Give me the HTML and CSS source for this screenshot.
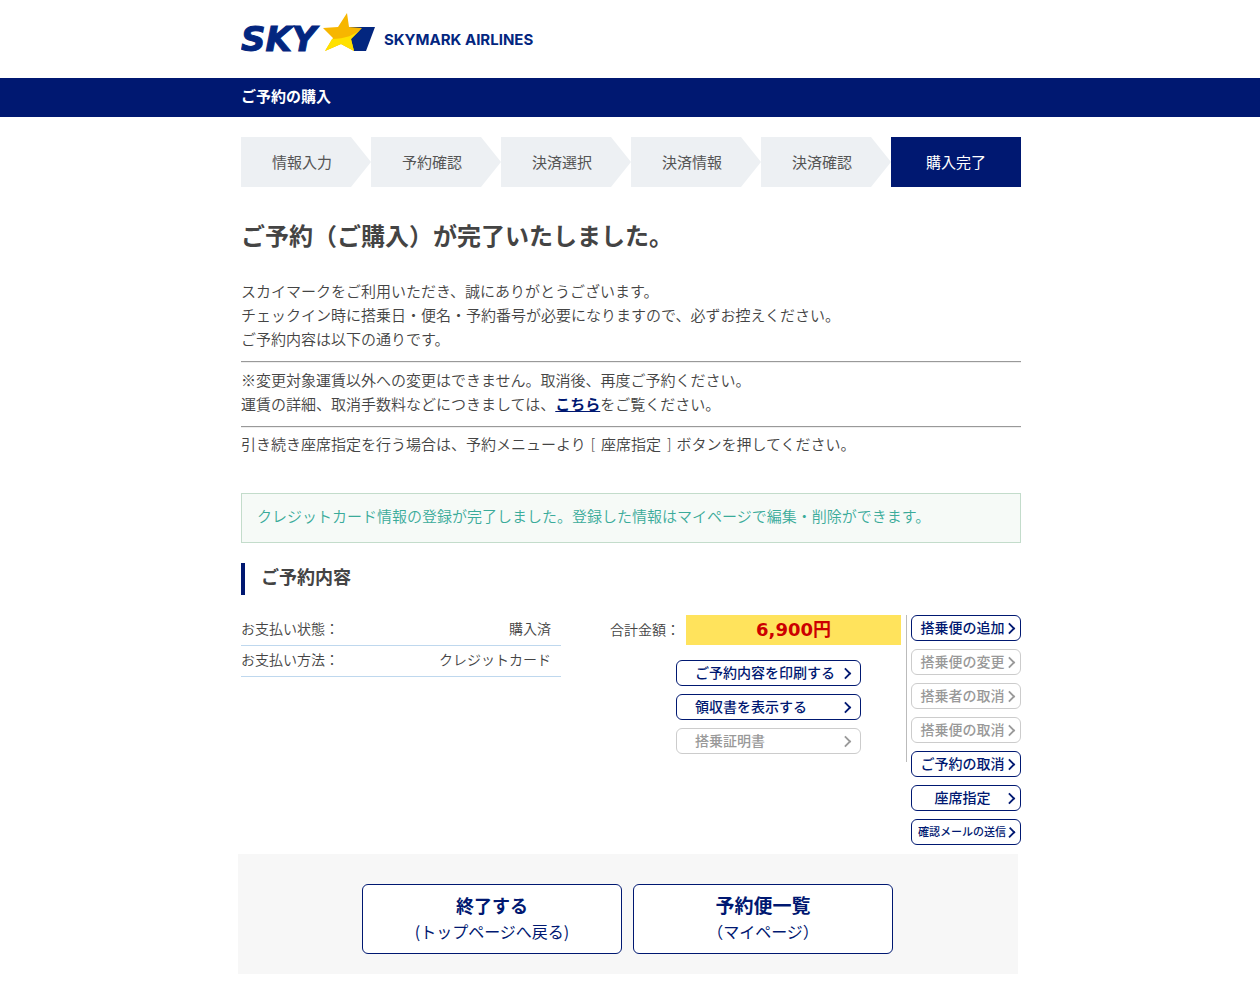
FILE: index.html
```html
<!DOCTYPE html>
<html lang="ja">
<head>
    <meta charset="UTF-8">
    <meta name="viewport" content="width=device-width, initial-scale=1.0">
    <title>ご予約の購入</title>
    <link rel="stylesheet" href="styles.css">
</head>
<body>
    <header class="site-header">
        <div class="wrap">
            <a href="#" class="logo">
                <svg width="300" height="50" viewBox="0 0 300 50">
                    <text class="logo-sky" x="0" y="39">SKY</text>
                    <path fill="#03267f" d="M107 15h27l-9 24h-12l-8-12z"/>
                    <path fill="#f7b600" d="M106 1l2 14 13 1-11 11 3 12-13-7-16 7 8-13-10-10 15-1z"/>
                    <path fill="#ffe100" d="M121 16l-11 11 3 12-13-7-16 7 7-12c13 0 23-4 30-11z"/>
                    <text class="logo-name" x="143" y="33">SKYMARK AIRLINES</text>
                </svg>
            </a>
        </div>
    </header>

    <div class="title-bar">
        <div class="wrap">
            <h1>ご予約の購入</h1>
        </div>
    </div>

    <main class="wrap">
        <ol class="steps">
            <li>情報入力</li>
            <li>予約確認</li>
            <li>決済選択</li>
            <li>決済情報</li>
            <li>決済確認</li>
            <li class="current">購入完了</li>
        </ol>

        <h2 class="complete">ご予約（ご購入）が完了いたしました。</h2>

        <p>スカイマークをご利用いただき、誠にありがとうございます。<br>
        チェックイン時に搭乗日・便名・予約番号が必要になりますので、必ずお控えください。<br>
        ご予約内容は以下の通りです。</p>
        <hr>
        <p>※変更対象運賃以外への変更はできません。取消後、再度ご予約ください。<br>
        運賃の詳細、取消手数料などにつきましては、<a href="#" class="here">こちら</a>をご覧ください。</p>
        <hr>
        <p class="seat-note">引き続き座席指定を行う場合は、予約メニューより [ 座席指定 ] ボタンを押してください。</p>

        <p class="notice">クレジットカード情報の登録が完了しました。登録した情報はマイページで編集・削除ができます。</p>

        <h3 class="section-title">ご予約内容</h3>

        <div class="detail">
            <table class="payment">
                <tr>
                    <th scope="row">お支払い状態：</th>
                    <td>購入済</td>
                </tr>
                <tr>
                    <th scope="row">お支払い方法：</th>
                    <td>クレジットカード</td>
                </tr>
            </table>

            <div class="total">
                <div class="total-row">
                    <span class="total-label">合計金額：</span>
                    <strong class="price">6,900円</strong>
                </div>
                <div class="print-buttons">
                    <button type="button" class="btn"><span>ご予約内容を印刷する</span></button>
                    <button type="button" class="btn"><span>領収書を表示する</span></button>
                    <button type="button" class="btn" disabled><span>搭乗証明書</span></button>
                </div>
            </div>

            <div class="menu">
                <button type="button" class="btn"><span>搭乗便の追加</span></button>
                <button type="button" class="btn" disabled><span>搭乗便の変更</span></button>
                <button type="button" class="btn" disabled><span>搭乗者の取消</span></button>
                <button type="button" class="btn" disabled><span>搭乗便の取消</span></button>
                <button type="button" class="btn"><span>ご予約の取消</span></button>
                <button type="button" class="btn"><span>座席指定</span></button>
                <button type="button" class="btn small"><span>確認メールの送信</span></button>
            </div>
        </div>

        <div class="bottom">
            <a href="#" class="big-btn"><strong>終了する</strong><span>(トップページへ戻る)</span></a>
            <a href="#" class="big-btn"><strong class="wide">予約便一覧</strong><span>（マイページ）</span></a>
        </div>
    </main>
</body>
</html>
```
FILE: styles.css
```css
* {
    margin: 0;
    padding: 0;
    box-sizing: border-box;
}

body {
    font-family: "Noto Sans CJK JP", sans-serif;
    font-size: 15px;
    line-height: 24px;
    font-weight: 350;
    color: #444;
    background-color: #fff;
}

.wrap {
    max-width: 782px;
    margin: 0 auto;
    padding-left: 2px;
}

/* Header */
.site-header {
    height: 78px;
    padding-top: 12px;
}

.logo svg {
    display: block;
}

.logo-sky {
    font-family: "DejaVu Sans", sans-serif;
    font-size: 34px;
    font-weight: bold;
    font-style: italic;
    fill: #03267f;
    stroke: #03267f;
}

.logo-name {
    font-family: Inter, sans-serif;
    font-size: 15px;
    font-weight: 700;
    fill: #03267f;
}

.title-bar {
    background-color: #001871;
    color: #fff;
}

.title-bar h1 {
    padding-bottom: 3px;
    font-size: 15px;
    line-height: 36px;
    font-weight: bold;
}

/* Steps */
.steps {
    display: grid;
    grid-template-columns: repeat(6, 1fr);
    margin: 20px 0 31px;
    list-style: none;
}

.steps li {
    padding-right: 8px;
    text-align: center;
    font-weight: 400;
    line-height: 50px;
    color: #555;
    background-color: #edf0f3;
    clip-path: polygon(0 0, calc(100% - 20px) 0, 100% 50%, calc(100% - 20px) 100%, 0 100%);
}

.steps .current {
    padding-right: 0;
    color: #fff;
    background-color: #001871;
    clip-path: none;
}

/* Message */
.complete {
    margin-bottom: 27px;
    font-size: 24px;
    line-height: 34px;
    font-weight: bold;
}

hr {
    margin: 10px 0 5px;
    border: solid;
    border-width: 1px 0;
    border-color: #999 #eee #eee;
}

.here {
    color: #001871;
    font-weight: bold;
}

.seat-note {
    font-family: "DejaVu Sans", "Noto Sans CJK JP", sans-serif;
}

.notice {
    margin: 36px 0 20px;
    padding: 10px 15px 14px;
    color: #3aab9a;
    background-color: #f6faf7;
    border: 1px solid #c3dccb;
}

.section-title {
    margin-bottom: 20px;
    padding: 0 0 6px 16px;
    font-size: 18px;
    line-height: 26px;
    border-left: 4px solid #001871;
}

/* Reservation detail */
.detail {
    display: flex;
    align-items: flex-start;
    font-size: 14px;
}

.payment {
    width: 320px;
    margin-right: 49px;
    border-spacing: 0;
}

.payment th,
.payment td {
    height: 31px;
    padding-bottom: 5px;
    font-weight: 350;
    text-align: left;
    border-bottom: 1px solid #bfd8ee;
}

.payment td {
    padding-right: 10px;
    text-align: right;
}

.total {
    flex: 1;
    margin-right: 4px;
    padding: 0 5px 8px 0;
    border-right: 1px solid #bbb;
}

.total-row {
    display: flex;
    gap: 6px;
    line-height: 30px;
}

.total-label {
    line-height: 28px;
}

.price {
    flex: 1;
    font-family: "DejaVu Sans", "Noto Sans CJK JP", sans-serif;
    font-size: 18px;
    font-weight: 700;
    text-align: center;
    color: #c00;
    background-color: #ffe35c;
}

.print-buttons,
.menu {
    display: flex;
    flex-direction: column;
    gap: 8px;
}

.print-buttons {
    width: 185px;
    margin: 15px 0 0 66px;
}

.menu {
    width: 110px;
}

/* Buttons */
.btn {
    display: flex;
    align-items: center;
    height: 26px;
    padding: 0 10px 0 18px;
    font-family: inherit;
    font-size: 14px;
    font-weight: 500;
    text-align: left;
    white-space: nowrap;
    color: #001871;
    background-color: #fff;
    border: 1px solid #001871;
    border-radius: 6px;
    cursor: pointer;
}

.btn span {
    flex: 1;
    padding-bottom: 2px;
}

.btn::after {
    content: "";
    width: 7px;
    height: 7px;
    border: solid currentColor;
    border-width: 2px 2px 0 0;
    transform: rotate(45deg) scale(0.9);
}

.btn:disabled {
    color: #999;
    border-color: #ccc;
    cursor: default;
}

.menu .btn {
    padding: 0 6px 0 8px;
    text-align: center;
}

.menu .small {
    padding-left: 6px;
    font-size: 11px;
}

/* Bottom navigation */
.bottom {
    display: flex;
    justify-content: center;
    gap: 11px;
    margin: 9px 3px 20px -3px;
    padding: 30px 1px 20px 0;
    background-color: #f7f7f7;
}

.big-btn {
    display: flex;
    flex-direction: column;
    width: 260px;
    height: 70px;
    padding-top: 7px;
    font-size: 16px;
    font-weight: 400;
    line-height: 26px;
    text-align: center;
    text-decoration: none;
    color: #001871;
    background-color: #fff;
    border: 1px solid #001871;
    border-radius: 6px;
}

.big-btn strong {
    font-size: 18px;
}

.big-btn .wide {
    font-size: 19px;
}
```
